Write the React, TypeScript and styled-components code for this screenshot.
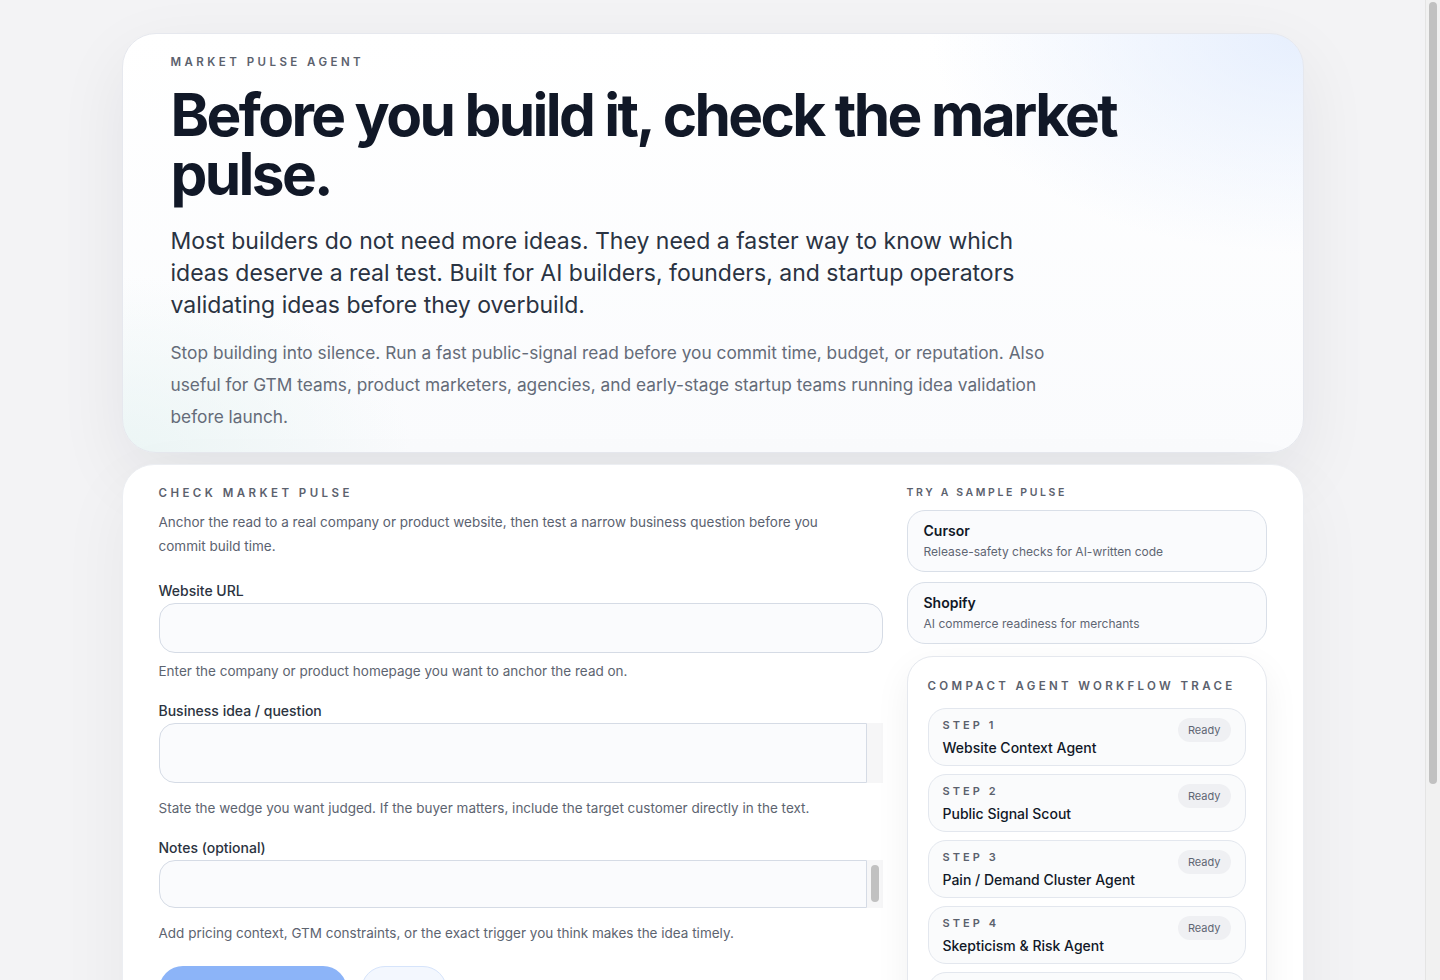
import React, { useState } from "react";
import styled, { createGlobalStyle } from "styled-components";

const GlobalStyle = createGlobalStyle`
  * { box-sizing: border-box; }
  body {
    margin: 0;
    background: #f3f3f5;
    font-family: Inter, "Noto Sans", "Liberation Sans", sans-serif;
    color: #111827;
  }
`;

const Shell = styled.div`
  padding-right: 15px;
`;

// the browser here hides native scrollbars, so the page one is drawn
const PageScrollbar = styled.div`
  position: fixed;
  top: 0;
  right: 0;
  width: 15px;
  height: 100vh;
  background: #f1f1f1;
  border-left: 1px solid #e4e4e4;
  padding: 2px 3px 0 3px;
`;

const PageThumb = styled.div`
  height: 782px;
  border-radius: 5px;
  background: #c1c1c1;
`;

const Page = styled.main`
  width: min(1182px, calc(100% - 48px));
  margin: 0 auto;
  padding: 33px 0 40px;
  display: flex;
  flex-direction: column;
  gap: 11px;
`;

const Hero = styled.section`
  border: 1px solid #e6e8ee;
  border-radius: 34px;
  padding: 20px 48px 19px;
  background:
    radial-gradient(ellipse 45% 75% at 100% 0%, rgba(226, 236, 253, 0.85), transparent 70%),
    radial-gradient(ellipse 35% 60% at 0% 100%, rgba(232, 244, 243, 0.8), transparent 70%),
    linear-gradient(180deg, #ffffff 0%, #fafbfd 100%);
  box-shadow: 0 24px 70px rgba(15, 23, 42, 0.07);
`;

const Eyebrow = styled.div<{ $size?: number; $spacing?: string }>`
  font-size: ${(p) => p.$size ?? 11.5}px;
  line-height: 16px;
  font-weight: 600;
  letter-spacing: ${(p) => p.$spacing ?? "0.3em"};
  text-transform: uppercase;
  color: #5b616d;
  white-space: nowrap;
`;

const Headline = styled.h1`
  margin: 15px 0 0;
  font-size: 58.5px;
  line-height: 59px;
  font-weight: 700;
  letter-spacing: -0.045em;
  color: #111827;
  max-width: 1000px;
`;

const Lead = styled.p`
  margin: 22px 0 0;
  max-width: 880px;
  font-size: 23px;
  line-height: 32px;
  color: #2a3342;
`;

const Support = styled.p`
  margin: 16px 0 0;
  max-width: 890px;
  font-size: 17.3px;
  line-height: 32px;
  color: #646b78;
`;

const Workspace = styled.section`
  background: #ffffff;
  border: 1px solid #eceef2;
  border-radius: 32px;
  padding: 20px 36px 36px;
  display: grid;
  grid-template-columns: 1fr 360px;
  gap: 24px;
  box-shadow: 0 24px 70px rgba(15, 23, 42, 0.05);
`;

const FormColumn = styled.div`
  display: flex;
  flex-direction: column;
`;

const Intro = styled.p`
  margin: 9px 0 0;
  max-width: 680px;
  font-size: 13.5px;
  line-height: 24px;
  color: #5b6270;
`;

const Field = styled.div<{ $top?: number }>`
  display: flex;
  flex-direction: column;
  margin-top: ${(p) => p.$top ?? 20}px;
`;

const Label = styled.label`
  font-size: 14px;
  line-height: 20px;
  font-weight: 500;
  color: #2b3340;
  margin-bottom: 2px;
`;

const TextInput = styled.input`
  height: 50px;
  width: 100%;
  border: 1px solid #d5dbe5;
  border-radius: 16px;
  background: #fafbfd;
  padding: 0 16px;
  font: inherit;
  font-size: 14px;
  color: #111827;
  outline: none;
`;

const AreaWrap = styled.div<{ $height: number }>`
  display: flex;
  height: ${(p) => p.$height}px;
`;

const TextArea = styled.textarea`
  flex: 1;
  height: 100%;
  border: 1px solid #d5dbe5;
  border-radius: 16px 0 0 16px;
  background: #fafbfd;
  padding: 14px 16px;
  font: inherit;
  font-size: 14px;
  line-height: 20px;
  color: #111827;
  resize: none;
  outline: none;
  overflow: hidden;
`;

const ScrollTrack = styled.div`
  width: 16px;
  background: #f6f6f7;
  padding: 5px 4px 6px 4px;
  display: flex;
`;

const ScrollThumb = styled.div`
  flex: 1;
  border-radius: 4px;
  background: #c1c1c1;
`;

const Help = styled.p<{ $gap?: number }>`
  margin: ${(p) => p.$gap ?? 8}px 0 0;
  font-size: 13.5px;
  line-height: 20px;
  color: #5d6470;
`;

const Actions = styled.div`
  display: flex;
  gap: 14px;
  margin-top: 23px;
`;

const PrimaryButton = styled.button`
  height: 48px;
  width: 188px;
  border: none;
  border-radius: 24px;
  background: #8cb4f8;
  color: #ffffff;
  font: inherit;
  font-size: 14px;
  font-weight: 600;
`;

const GhostButton = styled.button`
  height: 48px;
  width: 86px;
  border: 1px solid #d6e4fb;
  border-radius: 24px;
  background: #f3f7fe;
  color: #3b5b9a;
  font: inherit;
  font-size: 14px;
  font-weight: 500;
`;

const SideColumn = styled.aside`
  display: flex;
  flex-direction: column;
`;

const SampleList = styled.div`
  display: flex;
  flex-direction: column;
  gap: 10px;
  margin-top: 9px;
`;

const SampleCard = styled.button`
  text-align: left;
  height: 62px;
  padding: 0 16px;
  border: 1px solid #d9dfe8;
  border-radius: 18px;
  background: #fafbfd;
  display: flex;
  flex-direction: column;
  justify-content: center;
  gap: 2px;
  font: inherit;
  cursor: pointer;
`;

const SampleTitle = styled.span`
  font-size: 14px;
  line-height: 20px;
  font-weight: 600;
  color: #111827;
`;

const SampleText = styled.span`
  font-size: 12px;
  line-height: 18px;
  color: #5f6673;
`;

const TraceCard = styled.div`
  margin-top: 12px;
  border: 1px solid #e5e8ee;
  border-radius: 26px;
  background: #ffffff;
  padding: 21px 20px 20px;
  box-shadow: 0 12px 36px rgba(15, 23, 42, 0.06);
  display: flex;
  flex-direction: column;
`;

const StepList = styled.div`
  display: flex;
  flex-direction: column;
  gap: 8px;
  margin-top: 14px;
`;

const StepCard = styled.div`
  height: 58px;
  border: 1px solid #e3e7ee;
  border-radius: 18px;
  background: #fafbfc;
  padding: 9px 14px 0 14px;
  display: flex;
  justify-content: space-between;
  align-items: flex-start;
`;

const StepText = styled.div`
  display: flex;
  flex-direction: column;
  gap: 6px;
`;

const StepLabel = styled.span`
  font-size: 11px;
  line-height: 14px;
  font-weight: 600;
  letter-spacing: 0.28em;
  color: #5b616d;
`;

const StepName = styled.span`
  font-size: 14px;
  line-height: 20px;
  font-weight: 500;
  color: #111827;
`;

const Badge = styled.span`
  padding: 0 10px;
  height: 24px;
  line-height: 24px;
  border-radius: 12px;
  background: #eff0f3;
  font-size: 11px;
  color: #5f6673;
`;

const samples = [
  { name: "Cursor", text: "Release-safety checks for AI-written code" },
  { name: "Shopify", text: "AI commerce readiness for merchants" },
];

const steps = [
  "Website Context Agent",
  "Public Signal Scout",
  "Pain / Demand Cluster Agent",
  "Skepticism & Risk Agent",
  "Verdict Synthesizer",
  "Next Test Planner",
];

export default function App() {
  const [url, setUrl] = useState("");
  const [idea, setIdea] = useState("");
  const [notes, setNotes] = useState("");

  return (
    <>
      <GlobalStyle />
      <Shell>
        <Page>
          <Hero>
            <Eyebrow>Market Pulse Agent</Eyebrow>
            <Headline>Before you build it, check the market pulse.</Headline>
            <Lead>
              Most builders do not need more ideas. They need a faster way to know which
              ideas deserve a real test. Built for AI builders, founders, and startup
              operators validating ideas before they overbuild.
            </Lead>
            <Support>
              Stop building into silence. Run a fast public-signal read before you commit
              time, budget, or reputation. Also useful for GTM teams, product marketers,
              agencies, and early-stage startup teams running idea validation before launch.
            </Support>
          </Hero>

          <Workspace>
            <FormColumn>
              <Eyebrow>Check Market Pulse</Eyebrow>
              <Intro>
                Anchor the read to a real company or product website, then test a narrow
                business question before you commit build time.
              </Intro>

              <Field $top={23}>
                <Label htmlFor="url">Website URL</Label>
                <TextInput id="url" value={url} onChange={(e) => setUrl(e.target.value)} />
                <Help>Enter the company or product homepage you want to anchor the read on.</Help>
              </Field>

              <Field>
                <Label htmlFor="idea">Business idea / question</Label>
                <AreaWrap $height={60}>
                  <TextArea id="idea" value={idea} onChange={(e) => setIdea(e.target.value)} />
                  <ScrollTrack />
                </AreaWrap>
                <Help $gap={15}>
                  State the wedge you want judged. If the buyer matters, include the target
                  customer directly in the text.
                </Help>
              </Field>

              <Field>
                <Label htmlFor="notes">Notes (optional)</Label>
                <AreaWrap $height={48}>
                  <TextArea id="notes" value={notes} onChange={(e) => setNotes(e.target.value)} />
                  <ScrollTrack>
                    <ScrollThumb />
                  </ScrollTrack>
                </AreaWrap>
                <Help $gap={15}>
                  Add pricing context, GTM constraints, or the exact trigger you think makes
                  the idea timely.
                </Help>
              </Field>

              <Actions>
                <PrimaryButton disabled>Check market pulse</PrimaryButton>
                <GhostButton>Reset</GhostButton>
              </Actions>
            </FormColumn>

            <SideColumn>
              <Eyebrow $size={10.5} $spacing="0.25em">Try a sample pulse</Eyebrow>
              <SampleList>
                {samples.map((s) => (
                  <SampleCard key={s.name}>
                    <SampleTitle>{s.name}</SampleTitle>
                    <SampleText>{s.text}</SampleText>
                  </SampleCard>
                ))}
              </SampleList>

              <TraceCard>
                <Eyebrow $size={11.5} $spacing="0.29em">Compact Agent Workflow Trace</Eyebrow>
                <StepList>
                  {steps.map((name, i) => (
                    <StepCard key={name}>
                      <StepText>
                        <StepLabel>STEP {i + 1}</StepLabel>
                        <StepName>{name}</StepName>
                      </StepText>
                      <Badge>Ready</Badge>
                    </StepCard>
                  ))}
                </StepList>
              </TraceCard>
            </SideColumn>
          </Workspace>
        </Page>
      </Shell>
      <PageScrollbar>
        <PageThumb />
      </PageScrollbar>
    </>
  );
}
